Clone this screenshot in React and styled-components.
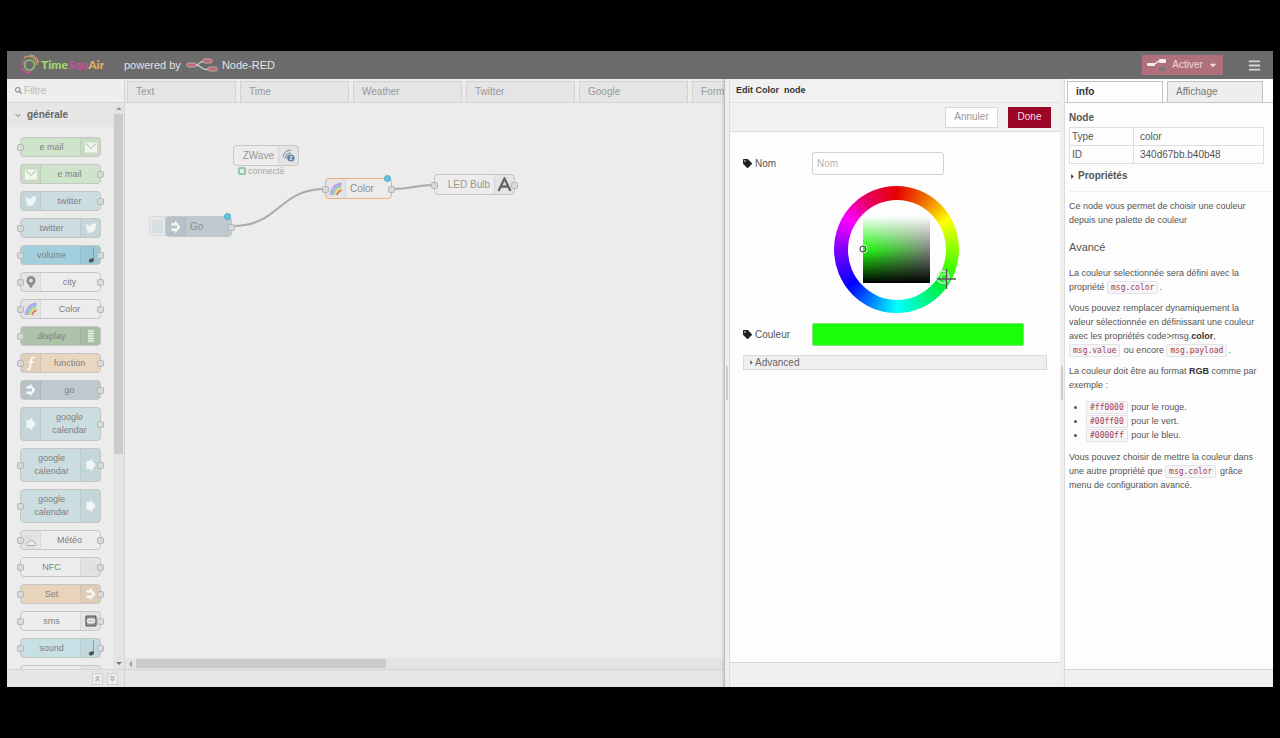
import React from "react";
import styled, { createGlobalStyle } from "styled-components";
import { FaSearch, FaBars, FaCaretDown, FaCaretRight, FaTwitter, FaTag, FaMapMarkerAlt, FaAngleDoubleUp, FaAngleDoubleDown } from "react-icons/fa";

const GlobalStyle = createGlobalStyle`
  *, *::before { box-sizing: border-box; }
  body {
    margin: 0;
    background: #000;
    font: 10px/14px "Liberation Sans", Arial, sans-serif;
    color: #555;
  }
  button, input { font: inherit; margin: 0; }
  p, h2, h3, ul { margin: 0; padding: 0; }
  ul { list-style: none; }
`;

const Page = styled.div`
  display: flex;
  height: 100vh;
  padding: 51px 7px;
`;

const Editor = styled.div`
  flex: 1;
  min-width: 0;
  display: flex;
  flex-direction: column;
  background: #ececec;
  overflow: hidden;
`;

/* ---------- Header ---------- */

const Header = styled.header`
  flex: none;
  height: 28px;
  display: flex;
  align-items: center;
  padding: 0 12px;
  background: #6b6b6b;
  color: #e2e2e2;
  font-size: 11px;
`;

const Brand = styled.div`
  display: flex;
  align-items: center;
  width: 105px;
  font: 900 12px/14px Lato, "Open Sans", sans-serif;
`;

const BrandPart = styled.span`
  color: ${(p) => p.$color};
`;

const FlowName = styled.div`
  display: flex;
  align-items: center;
  gap: 4px;
  margin-left: 5px;
`;

const HeaderTools = styled.div`
  display: flex;
  align-items: center;
  gap: 25px;
  margin-left: auto;
`;

const DeployButton = styled.button`
  display: flex;
  align-items: center;
  justify-content: space-between;
  width: 81px;
  height: 20px;
  padding: 0 5px;
  border: 0;
  background: #b0707b;
  color: #eadadd;
  font-size: 10px;
`;

const MenuButton = styled.button`
  display: flex;
  padding: 0;
  border: 0;
  background: none;
  color: #d4d4d4;
  font-size: 13px;
`;

/* ---------- Shared pieces ---------- */

const Main = styled.main`
  flex: 1;
  min-height: 0;
  display: flex;
`;

const TabBar = styled.div`
  flex: none;
  display: flex;
  gap: 4px;
  height: 24px;
  padding: 2px 2px 0;
  overflow: hidden;
  border-bottom: 1px solid ${(p) => (p.$light ? "#c8c8c8" : "#d6d6d6")};
`;

const Tab = styled.button`
  flex: none;
  width: ${(p) => p.$width}px;
  height: ${(p) => (p.$active ? 22 : 21)}px;
  padding: ${(p) => (p.$active ? "0 8px 2px" : "0 8px")};
  text-align: left;
  border: 1px solid ${(p) => (p.$side ? "#c2c2c2" : "#d2d2d2")};
  border-bottom: 0;
  background: ${(p) => (p.$active ? "#fdfdfd" : p.$side ? "#eee" : "#e5e5e5")};
  color: ${(p) => (p.$active ? "#333" : p.$side ? "#777" : "#999")};
`;

const Footer = styled.div`
  flex: none;
  display: flex;
  align-items: center;
  justify-content: flex-end;
  gap: 4px;
  height: ${(p) => p.$height || 18}px;
  padding-right: 6px;
  border-top: 1px solid #d4d4d4;
  background: ${(p) => p.$bg || "#e5e5e5"};
`;

const FooterButton = styled.button`
  display: flex;
  align-items: center;
  justify-content: center;
  width: 11px;
  height: 12px;
  padding: 0;
  border: 1px solid #d0d0d0;
  background: #ececec;
  color: #aaa;
  font-size: 7px;
`;

const Arrow = styled.span`
  width: 0;
  height: 0;
  border: 3px solid transparent;
  ${(p) => p.$dir === "up" && "border-bottom-color: #999; border-top-width: 0;"}
  ${(p) => p.$dir === "down" && "border-top-color: #777; border-bottom-width: 0;"}
  ${(p) => p.$dir === "left" && "border-right-color: #999; border-left-width: 0;"}
`;

/* ---------- Palette ---------- */

const Palette = styled.aside`
  flex: none;
  width: 118px;
  display: flex;
  flex-direction: column;
  border-right: 1px solid #d4d4d4;
`;

const Search = styled.label`
  flex: none;
  display: flex;
  align-items: center;
  gap: 2px;
  height: 24px;
  padding-left: 8px;
  border-bottom: 1px solid #d6d6d6;
  background: #eeeeee;
  color: #888;
  font-size: 7px;
`;

const SearchInput = styled.input`
  width: 90px;
  padding: 0;
  border: 0;
  outline: 0;
  background: none;
  font-size: 10px;
  &::placeholder { color: #bbb; }
`;

const PaletteBody = styled.div`
  flex: 1;
  min-height: 0;
  display: flex;
`;

const PaletteList = styled.div`
  flex: 1;
  overflow: hidden;
`;

const Category = styled.h2`
  display: flex;
  align-items: center;
  gap: 6px;
  height: 24px;
  padding-left: 8px;
  background: #e6e6e6;
  color: #666;
  font-size: 10px;
`;

const PaletteNodes = styled.ul`
  display: flex;
  flex-direction: column;
  gap: 7px;
  padding: 10px 5px 0 13px;
`;

const VScroll = styled.div`
  flex: none;
  width: 11px;
  display: flex;
  flex-direction: column;
  align-items: center;
  justify-content: space-between;
  padding: 4px 1px;
  background: #e4e4e4;
`;

const VThumb = styled.div`
  width: 9px;
  height: 61%;
  margin: 4px 0 auto;
  background: #cbcbcb;
`;

const NodeBox = styled.li`
  position: relative;
  display: flex;
  flex-direction: ${(p) => (p.$iconRight ? "row-reverse" : "row")};
  width: ${(p) => p.$width || 81}px;
  height: ${(p) => p.$height || 20}px;
  border: 1px solid ${(p) => p.$border || "#c6c6c6"};
  border-radius: 4px;
  background: ${(p) => p.$color};
  color: ${(p) => p.$text || "#808080"};
`;

const NodeIcon = styled.span`
  flex: none;
  display: flex;
  align-items: center;
  justify-content: center;
  width: 20px;
  background: rgba(0, 0, 0, 0.03);
  border-${(p) => (p.$iconRight ? "left" : "right")}: 1px solid rgba(0, 0, 0, 0.05);
  color: ${(p) => p.$color || "#f1f5f3"};
  font-size: 12px;
`;

const NodeLabel = styled.span`
  flex: 1;
  display: flex;
  align-items: center;
  justify-content: center;
  text-align: center;
  line-height: 13px;
  padding: ${(p) => (p.$iconRight ? "0 0 0 2px" : "0 2px 0 0")};
  font-size: 9px;
`;

const CanvasLabel = styled(NodeLabel)`
  justify-content: ${(p) => (p.$iconRight ? "flex-end" : "flex-start")};
  padding: 0 4px;
  font-size: 10px;
`;

const Port = styled.span`
  position: absolute;
  top: 50%;
  ${(p) => p.$side}: -4px;
  width: 7px;
  height: 7px;
  margin-top: -3px;
  border: 1px solid #b8b8b8;
  border-radius: 2px;
  background: #d9d9d9;
`;

/* ---------- Workspace ---------- */

const Workspace = styled.section`
  flex: 1;
  min-width: 0;
  display: flex;
  flex-direction: column;
`;

const Canvas = styled.ul`
  position: relative;
  flex: 1;
  min-height: 0;
  overflow: hidden;
`;

const Wires = styled.svg`
  position: absolute;
  inset: 0;
`;

const CanvasNode = styled(NodeBox)`
  position: absolute;
  left: ${(p) => p.$x}px;
  top: ${(p) => p.$y}px;
`;

const Changed = styled.span`
  position: absolute;
  top: -4px;
  right: 0;
  width: 7px;
  height: 7px;
  border: 1px solid #4fa6c4;
  border-radius: 50%;
  background: #5cc8e8;
`;

const InjectButton = styled.button`
  position: absolute;
  left: 24px;
  top: 113px;
  width: 20px;
  height: 20px;
  padding: 2px;
  border: 1px solid #dadada;
  border-radius: 4px;
  background: #e8e8e8;
  &::before {
    content: "";
    display: block;
    width: 11px;
    height: 13px;
    border-radius: 2px;
    background: #d6dfe2;
  }
`;

const Status = styled.span`
  position: absolute;
  left: 4px;
  top: 20px;
  display: flex;
  align-items: center;
  gap: 2px;
  color: #aaa;
  font-size: 9px;
  line-height: 10px;
  &::before {
    content: "";
    width: 8px;
    height: 8px;
    border: 2px solid #8fc8aa;
    border-radius: 2px;
  }
`;

const HScroll = styled.div`
  flex: none;
  display: flex;
  align-items: center;
  gap: 4px;
  height: 11px;
  padding-left: 4px;
  background: #e4e4e4;
`;

const HThumb = styled.div`
  width: 42%;
  height: 9px;
  background: #cbcbcb;
`;

/* ---------- Edit tray ---------- */

const Tray = styled.section`
  flex: none;
  width: 336px;
  display: flex;
  border-left: 1px solid #bdbdbd;
  background: #fdfdfd;
  box-shadow: -1px 0 2px rgba(0, 0, 0, 0.15);
`;

const Grip = styled.div`
  flex: none;
  width: 5px;
  display: flex;
  align-items: center;
  justify-content: center;
  background: #eee;
  border-right: 1px solid #dcdcdc;
  &::before {
    content: "";
    width: 2px;
    height: 34px;
    background: #ccc;
  }
`;

const TrayContent = styled.div`
  flex: 1;
  min-width: 0;
  display: flex;
  flex-direction: column;
`;

const TrayTitle = styled.h2`
  height: 24px;
  padding-left: 6px;
  border-bottom: 1px solid #e0e0e0;
  background: #f1f1f1;
  color: #333;
  font-size: 9px;
  line-height: 23px;
  white-space: pre;
`;

const TrayActions = styled.div`
  display: flex;
  align-items: center;
  justify-content: flex-end;
  gap: 10px;
  height: 29px;
  padding-right: 9px;
  border-bottom: 1px solid #dcdcdc;
  background: #f1f1f1;
`;

const TrayButton = styled.button`
  width: ${(p) => (p.$primary ? 43 : 53)}px;
  height: 21px;
  padding: 0;
  border: 1px solid ${(p) => (p.$primary ? "#8f0a26" : "#d8d8d8")};
  background: ${(p) => (p.$primary ? "#9c0526" : "#fefefe")};
  color: ${(p) => (p.$primary ? "#f4dfe3" : "#999")};
`;

const Form = styled.form`
  flex: 1;
  padding: 20px 13px 0;
`;

const Field = styled.div`
  display: flex;
  align-items: center;
`;

const FieldLabel = styled.label`
  display: flex;
  align-items: center;
  gap: 3px;
  width: 69px;
  svg { color: #222; font-size: 9px; transform: scaleX(1); }
`;

const TextInput = styled.input`
  width: 132px;
  height: 23px;
  padding: 0 4px;
  border: 1px solid #d2d2d2;
  border-radius: 3px;
  background: #fefefe;
  &::placeholder { color: #b5b5b5; }
`;

const ColorInput = styled.input`
  width: 212px;
  height: 23px;
  border: 1px solid #7ee27a;
  border-radius: 2px;
  background: #1bff0a;
  color: #1bff0a;
`;

const Wheel = styled.div`
  position: relative;
  display: flex;
  align-items: center;
  justify-content: center;
  width: 125px;
  height: 127px;
  margin: 11px 0 10px 91px;
  border-radius: 50%;
  background: conic-gradient(#e60000, #f07000 30deg, #ff0 60deg, #3cff00 110deg, #00f040 130deg, #0ff 180deg, #00f 232deg, #8000ff 270deg, #f0f 302deg, #e60060 330deg, #e60000);
`;

const WheelHole = styled.div`
  display: flex;
  align-items: center;
  justify-content: center;
  width: 98px;
  height: 100px;
  border-radius: 50%;
  background: #fdfdfd;
`;

const Shade = styled.div`
  width: 67px;
  height: 67px;
  background:
    linear-gradient(#fdfdfd, rgba(255, 255, 255, 0) 50%, rgba(0, 0, 0, 0) 50%, #000),
    linear-gradient(to right, #1bff0a, #808080);
`;

const Markers = styled.svg`
  position: absolute;
  inset: 0;
`;

const Advanced = styled.button`
  display: flex;
  align-items: center;
  width: 100%;
  height: 15px;
  margin-top: 9px;
  padding: 0 4px;
  border: 1px solid #d9d9d9;
  background: #efefef;
  color: #666;
  svg { font-size: 7px; }
`;

/* ---------- Sidebar ---------- */

const Sidebar = styled.aside`
  flex: none;
  width: 213px;
  display: flex;
  background: #fdfdfd;
`;

const SidebarContent = styled.div`
  flex: 1;
  min-width: 0;
  display: flex;
  flex-direction: column;
`;

const Info = styled.div`
  flex: 1;
  min-height: 0;
  padding: 8px 3px 0 4px;
`;

const InfoTitle = styled.h3`
  font-size: 10px;
  color: #555;
`;

const Properties = styled.table`
  width: 195px;
  margin: 2px 0 5px;
  border-collapse: collapse;
  th, td {
    height: 18px;
    padding: 1px 6px;
    border: 1px solid #ddd;
    font-weight: normal;
    text-align: left;
  }
  th { width: 64px; padding-left: 2px; }
`;

const Expander = styled.button`
  display: flex;
  align-items: center;
  gap: 2px;
  padding: 0;
  border: 0;
  background: none;
  color: #555;
  font-weight: bold;
  svg { font-size: 7px; color: #333; }
`;

const Help = styled.div`
  margin-top: 8px;
  padding-top: 7px;
  border-top: 1px solid #eee;
  color: #555;
  font-size: 9px;
  p + p { margin-top: 7px; }
  b { color: #333; }
`;

const HelpHeading = styled.h3`
  margin: 13px 0 12px;
  color: #555;
  font-size: 11px;
  font-weight: normal;
`;

const Colors = styled.ul`
  margin: 8px 0;
  padding-left: 17px;
  list-style: disc;
`;

const Code = styled.code`
  margin-right: 1px;
  padding: 1px 3px;
  border: 1px solid #e4e4e8;
  border-radius: 2px;
  background: #f6f6f8;
  color: #a33a50;
  font: 8px/10px "DejaVu Sans Mono", monospace;
`;

/* ---------- Drawings ---------- */

const Svg = ({ w = 14, h = 14, children }) => (
  <svg width={w} height={h} viewBox={`0 0 ${w} ${h}`} fill="none" aria-hidden="true">{children}</svg>
);

const Mail = () => (
  <Svg w={12} h={11}><rect y="0.5" width="12" height="10" fill="#f3f5f1" /><path d="M1 1.5l5 5 5-5" stroke="#bcd6b6" strokeWidth="1.2" /></Svg>
);
const Note = () => (
  <Svg w={12} h={18}><path d="M8.5 1v13" stroke="#999" /><ellipse cx="6.4" cy="14.4" rx="2.7" ry="2" fill="#555" transform="rotate(-20 6.4 14.4)" /></Svg>
);
const Rainbow = () => (
  <Svg>
    <path d="M1.500 13C2 6.500 6 2 12.500 1.500" stroke="#b79be0" strokeWidth="1.800" />
    <path d="M3.300 13C4 7.800 7.500 4 12.500 3.300" stroke="#8fb5e8" strokeWidth="1.600" />
    <path d="M5 13C5.500 9 8.500 5.700 12.500 5" stroke="#a9d68b" strokeWidth="1.600" />
    <path d="M6.500 13C7 10 9.500 7.300 12.500 6.700" stroke="#f0dc7c" strokeWidth="1.600" />
    <path d="M8 13C8.500 11 10.300 9 12.500 8.300" stroke="#d0705f" strokeWidth="1.600" />
  </Svg>
);
const Bars = () => (
  <Svg w={8} h={12}><path d="M1 1h6M1 3.500h6M1 6h6M1 8.500h6M1 11h6" stroke="#eef3ee" strokeWidth="1.500" /></Svg>
);
const Func = () => (
  <Svg w={10} h={15}><path d="M8.500 2.200C7.500.8 5.800 1 5.400 3.200L4.200 11c-.3 2.300-1.600 3-3 2.200M2.500 6h5" stroke="#faf5ee" strokeWidth="1.900" /></Svg>
);
const Inject = () => (
  <Svg w={12} h={14}><path d="M1.500 3H5V.5L10.500 7 5 13.500V11H1.500V8.500H7v-3H1.500z" fill="#f7f7fa" /></Svg>
);
const Block = () => (
  <Svg w={10} h={16}><path d="M.5 4H4.500V1L9.500 8l-5 7v-3H.5z" fill="#f3f6f6" /></Svg>
);
const Weather = () => (
  <Svg w={13} h={13}><path d="M4.500 6A2.200 2.200 0 0 1 6 3.800M4 1v1.500M1 2l1.200 1.200M.5 5.500H2M7 1.800L6.300 3" stroke="#cfca9c" /><path d="M3 11.500h8.300c1.500-.8.7-2.700-.9-2.500C10 6 6.500 5.500 5.500 8 3 7.500 1.500 10 3 11.500z" stroke="#aaa" fill="#eee" /></Svg>
);
const Nfc = () => (
  <Svg><circle cx="7" cy="6.500" r="5.500" stroke="#dcdcdc" /><path d="M4.500 9V6.500a2.500 2.500 0 0 1 5 0V9M7 6v6" stroke="#dcdcdc" /></Svg>
);
const Sms = () => (
  <Svg w={12} h={12}><rect x="1" y="1" width="10" height="10" rx="1" fill="#999" stroke="#555" strokeWidth="1.200" /><rect x="1.500" y="3" width="9" height="6" rx="2.500" fill="#eee" stroke="#777" strokeWidth=".6" /><path d="M3.500 6h5" stroke="#777" strokeDasharray="1 1" /></Svg>
);
const ZWaveIcon = () => (
  <Svg w={13} h={13}><path d="M1 8.500C1.500 4.500 4.500 1.500 9 1M3 9.500C3.500 6.500 5.500 4.300 9 3.800M5 10c.2-2 1.500-3.500 3.500-4" stroke="#8298ae" strokeWidth="1.200" /><circle cx="9" cy="9" r="3.600" fill="#6484a4" /><path d="M7.800 7.700h2.300L8 10.300h2.300" stroke="#eee" strokeWidth=".9" /></Svg>
);
const Bulb = () => (
  <Svg w={15} h={15}><path d="M1.500 14L7.500 1.500l6 12.500M4 9.500h7" stroke="#666" strokeWidth="2.300" /></Svg>
);
const Swirl = () => (
  <Svg w={22} h={22}>
    <circle cx="10.500" cy="11" r="5" stroke="#8fbf6a" strokeWidth="1.700" />
    <path d="M1.500 11.500c.3 4 3.500 8 9 8.500" stroke="#b04c8c" strokeWidth="1.500" />
    <path d="M3.500 14.500c2 4 6 4.500 9 3" stroke="#c0609a" strokeWidth="1.200" />
    <path d="M5 3.800C8 1.500 13 1.500 16 5c1.500 2 2 4 1.800 6" stroke="#c79a64" strokeWidth="1.500" />
    <path d="M11 1c5 .3 8 4 8.500 8" stroke="#d4a96e" strokeWidth="1.200" />
    <path d="M3.300 11C3.500 8.500 4.500 7 6 5.800" stroke="#c0609a" strokeWidth="1.200" />
  </Svg>
);
const RedLogo = () => (
  <Svg w={32} h={14}>
    <path d="M9 7c6 0 4-4 9-4M9 7c7 0 5 4.500 13 4.500" stroke="#c8c8c8" strokeWidth="1.300" />
    {[[1, 5], [17, 1], [22, 9]].map(([x, y]) => (
      <rect key={x} x={x} y={y} width="9" height="4" rx="1.500" fill="#c0696f" stroke="#cdbcbd" strokeWidth=".8" />
    ))}
  </Svg>
);
const DeployIcon = () => (
  <Svg w={20} h={14}>
    <path d="M6 6c5 0 3-3 7-3" stroke="#eee" strokeWidth="1.500" />
    <rect x="0" y="5" width="8" height="3" rx="1" fill="#f2ecec" />
    <rect x="12" y="1" width="7" height="4" rx="1" fill="#f2ecec" />
    <rect x="12" y="9" width="7" height="4" rx="1" fill="#777" />
  </Svg>
);
const Chevron = () => <Svg w={6} h={5}><path d="M.5 1L3 3.500 5.500 1" stroke="#777" /></Svg>;

/* ---------- Data ---------- */

const paletteNodes = [
  { label: "e mail", color: "#cfe5cb", icon: <Mail />, right: true, ports: "l" },
  { label: "e mail", color: "#cfe5cb", icon: <Mail />, ports: "r" },
  { label: "twitter", color: "#cbdde0", icon: <FaTwitter />, ports: "r" },
  { label: "twitter", color: "#cbdde0", icon: <FaTwitter />, right: true, ports: "l" },
  { label: "volume", color: "#a2cede", icon: <Note />, right: true, ports: "lr" },
  { label: "city", color: "#ececec", icon: <FaMapMarkerAlt />, iconColor: "#8c8c8c", ports: "lr" },
  { label: "Color", color: "#ececec", icon: <Rainbow />, ports: "lr" },
  { label: "display", color: "#adc4ab", icon: <Bars />, right: true, ports: "l" },
  { label: "function", color: "#e8d6bf", icon: <Func />, ports: "lr" },
  { label: "go", color: "#bdc9cf", icon: <Inject />, ports: "r" },
  { label: "google calendar", color: "#cbdde0", icon: <Block />, ports: "r", tall: true },
  { label: "google calendar", color: "#cbdde0", icon: <Block />, right: true, ports: "lr", tall: true },
  { label: "google calendar", color: "#cbdde0", icon: <Block />, right: true, ports: "l", tall: true },
  { label: "Météo", color: "#ececec", icon: <Weather />, ports: "lr" },
  { label: "NFC", color: "#ececec", icon: <Nfc />, right: true, ports: "lr" },
  { label: "Set", color: "#e8d4bb", icon: <Inject />, right: true, ports: "lr" },
  { label: "sms", color: "#ececec", icon: <Sms />, right: true, ports: "lr" },
  { label: "sound", color: "#c6e0e6", icon: <Note />, right: true, ports: "lr" },
  { label: "", color: "#ececec", icon: null, right: true, ports: "" },
];

const tabs = ["Text", "Time", "Weather", "Twitter", "Google", "Formation"];

function NodeParts({ label, icon, right, ports, iconColor, onCanvas }) {
  const Label = onCanvas ? CanvasLabel : NodeLabel;
  return (
    <>
      <NodeIcon $iconRight={right} $color={iconColor}>{icon}</NodeIcon>
      <Label $iconRight={right}>{label}</Label>
      {ports.includes("l") && <Port $side="left" />}
      {ports.includes("r") && <Port $side="right" />}
    </>
  );
}

export default function App() {
  return (
    <Page>
      <GlobalStyle />
      <Editor>
        <Header>
          <Brand>
            <Swirl />
            <BrandPart $color="#a5d86e">Time</BrandPart>
            <BrandPart $color="#c2549c">Squ</BrandPart>
            <BrandPart $color="#e2b062">Air</BrandPart>
          </Brand>
          <span>powered by</span>
          <FlowName><RedLogo />Node-RED</FlowName>
          <HeaderTools>
            <DeployButton><DeployIcon />Activer<FaCaretDown /></DeployButton>
            <MenuButton aria-label="Menu"><FaBars /></MenuButton>
          </HeaderTools>
        </Header>

        <Main>
          <Palette>
            <Search>
              <FaSearch />
              <SearchInput placeholder="Filtre" aria-label="Filtre" />
            </Search>
            <PaletteBody>
              <PaletteList>
                <Category><Chevron />générale</Category>
                <PaletteNodes>
                  {paletteNodes.map((n, i) => (
                    <NodeBox key={i} $color={n.color} $iconRight={n.right} $height={n.tall ? 34 : 20}>
                      <NodeParts {...n} />
                    </NodeBox>
                  ))}
                </PaletteNodes>
              </PaletteList>
              <VScroll><Arrow $dir="up" /><VThumb /><Arrow $dir="down" /></VScroll>
            </PaletteBody>
            <Footer>
              <FooterButton aria-label="Collapse all"><FaAngleDoubleUp /></FooterButton>
              <FooterButton aria-label="Expand all"><FaAngleDoubleDown /></FooterButton>
            </Footer>
          </Palette>

          <Workspace>
            <TabBar>
              {tabs.map((t) => <Tab key={t} $width={109}>{t}</Tab>)}
            </TabBar>
            <Canvas>
              <Wires width="100%" height="100%" fill="none" stroke="#aaa" strokeWidth="2">
                <path d="M108 123C155 123 153 86 200 86" />
                <path d="M267 86C290 86 287 82 310 82" />
              </Wires>
              <CanvasNode $x={108} $y={42} $width={66} $height={21} $color="#ececec" $text="#999" $iconRight>
                <NodeParts label="ZWave" icon={<ZWaveIcon />} right ports="" onCanvas />
                <Status>connectè</Status>
              </CanvasNode>
              <InjectButton aria-label="Go" />
              <CanvasNode $x={40} $y={113} $width={67} $height={21} $color="#bdc9cf" $text="#8c8c8c">
                <NodeParts label="Go" icon={<Inject />} ports="r" onCanvas />
                <Changed />
              </CanvasNode>
              <CanvasNode $x={200} $y={75} $width={67} $height={21} $color="#ececec" $text="#8c8c8c" $border="#eab184">
                <NodeParts label="Color" icon={<Rainbow />} ports="lr" onCanvas />
                <Changed />
              </CanvasNode>
              <CanvasNode $x={309} $y={71} $width={81} $height={21} $color="#ececec" $text="#999" $iconRight>
                <NodeParts label="LED Bulb" icon={<Bulb />} right ports="lr" onCanvas />
              </CanvasNode>
            </Canvas>
            <HScroll><Arrow $dir="left" /><HThumb /></HScroll>
            <Footer />
          </Workspace>

          <Tray>
            <Grip />
            <TrayContent>
              <TrayTitle>Edit Color  node</TrayTitle>
              <TrayActions>
                <TrayButton>Annuler</TrayButton>
                <TrayButton $primary>Done</TrayButton>
              </TrayActions>
              <Form>
                <Field>
                  <FieldLabel htmlFor="name"><FaTag />Nom</FieldLabel>
                  <TextInput id="name" placeholder="Nom" />
                </Field>
                <Wheel>
                  <WheelHole><Shade /></WheelHole>
                  <Markers width="125" height="127" overflow="visible" fill="none">
                    <circle cx="29" cy="63" r="4" stroke="#eee" />
                    <circle cx="29" cy="63" r="3" stroke="#333" />
                    <circle cx="109" cy="91" r="6" stroke="#ddd" strokeWidth="1.500" />
                    <circle cx="110" cy="91" r="3" stroke="#eee" />
                    <path d="M103 93h19M112.500 83v20" stroke="#555" strokeWidth="1.300" />
                  </Markers>
                </Wheel>
                <Field>
                  <FieldLabel htmlFor="color"><FaTag />Couleur</FieldLabel>
                  <ColorInput id="color" readOnly />
                </Field>
                <Advanced type="button"><FaCaretRight />Advanced</Advanced>
              </Form>
              <Footer $height={25} $bg="#f0f0f0" />
            </TrayContent>
          </Tray>

          <Sidebar>
            <Grip />
            <SidebarContent>
              <TabBar $light>
                <Tab $width={96} $active $side><b>info</b></Tab>
                <Tab $width={96} $side>Affichage</Tab>
              </TabBar>
              <Info>
                <InfoTitle>Node</InfoTitle>
                <Properties>
                  <tbody>
                    <tr><th scope="row">Type</th><td>color</td></tr>
                    <tr><th scope="row">ID</th><td>340d67bb.b40b48</td></tr>
                  </tbody>
                </Properties>
                <Expander><FaCaretRight />Propriétés</Expander>
                <Help>
                  <p>Ce node vous permet de choisir une couleur<br />depuis une palette de couleur</p>
                  <HelpHeading>Avancé</HelpHeading>
                  <p>La couleur selectionnée sera défini avec la<br />propriété <Code>msg.color</Code>.</p>
                  <p>
                    Vous pouvez remplacer dynamiquement la<br />
                    valeur sélectionnée en définissant une couleur<br />
                    avec les propriétés code&gt;msg.<b>color</b>,<br />
                    <Code>msg.value</Code> ou encore <Code>msg.payload</Code>.
                  </p>
                  <p>La couleur doit être au format <b>RGB</b> comme par<br />exemple :</p>
                  <Colors>
                    <li><Code>#ff0000</Code> pour le rouge.</li>
                    <li><Code>#00ff00</Code> pour le vert.</li>
                    <li><Code>#0000ff</Code> pour le bleu.</li>
                  </Colors>
                  <p>
                    Vous pouvez choisir de mettre la couleur dans<br />
                    une autre propriété que <Code>msg.color</Code> grâce<br />
                    menu de configuration avancé.
                  </p>
                </Help>
              </Info>
              <Footer $bg="#f0f0f0" />
            </SidebarContent>
          </Sidebar>
        </Main>
      </Editor>
    </Page>
  );
}
